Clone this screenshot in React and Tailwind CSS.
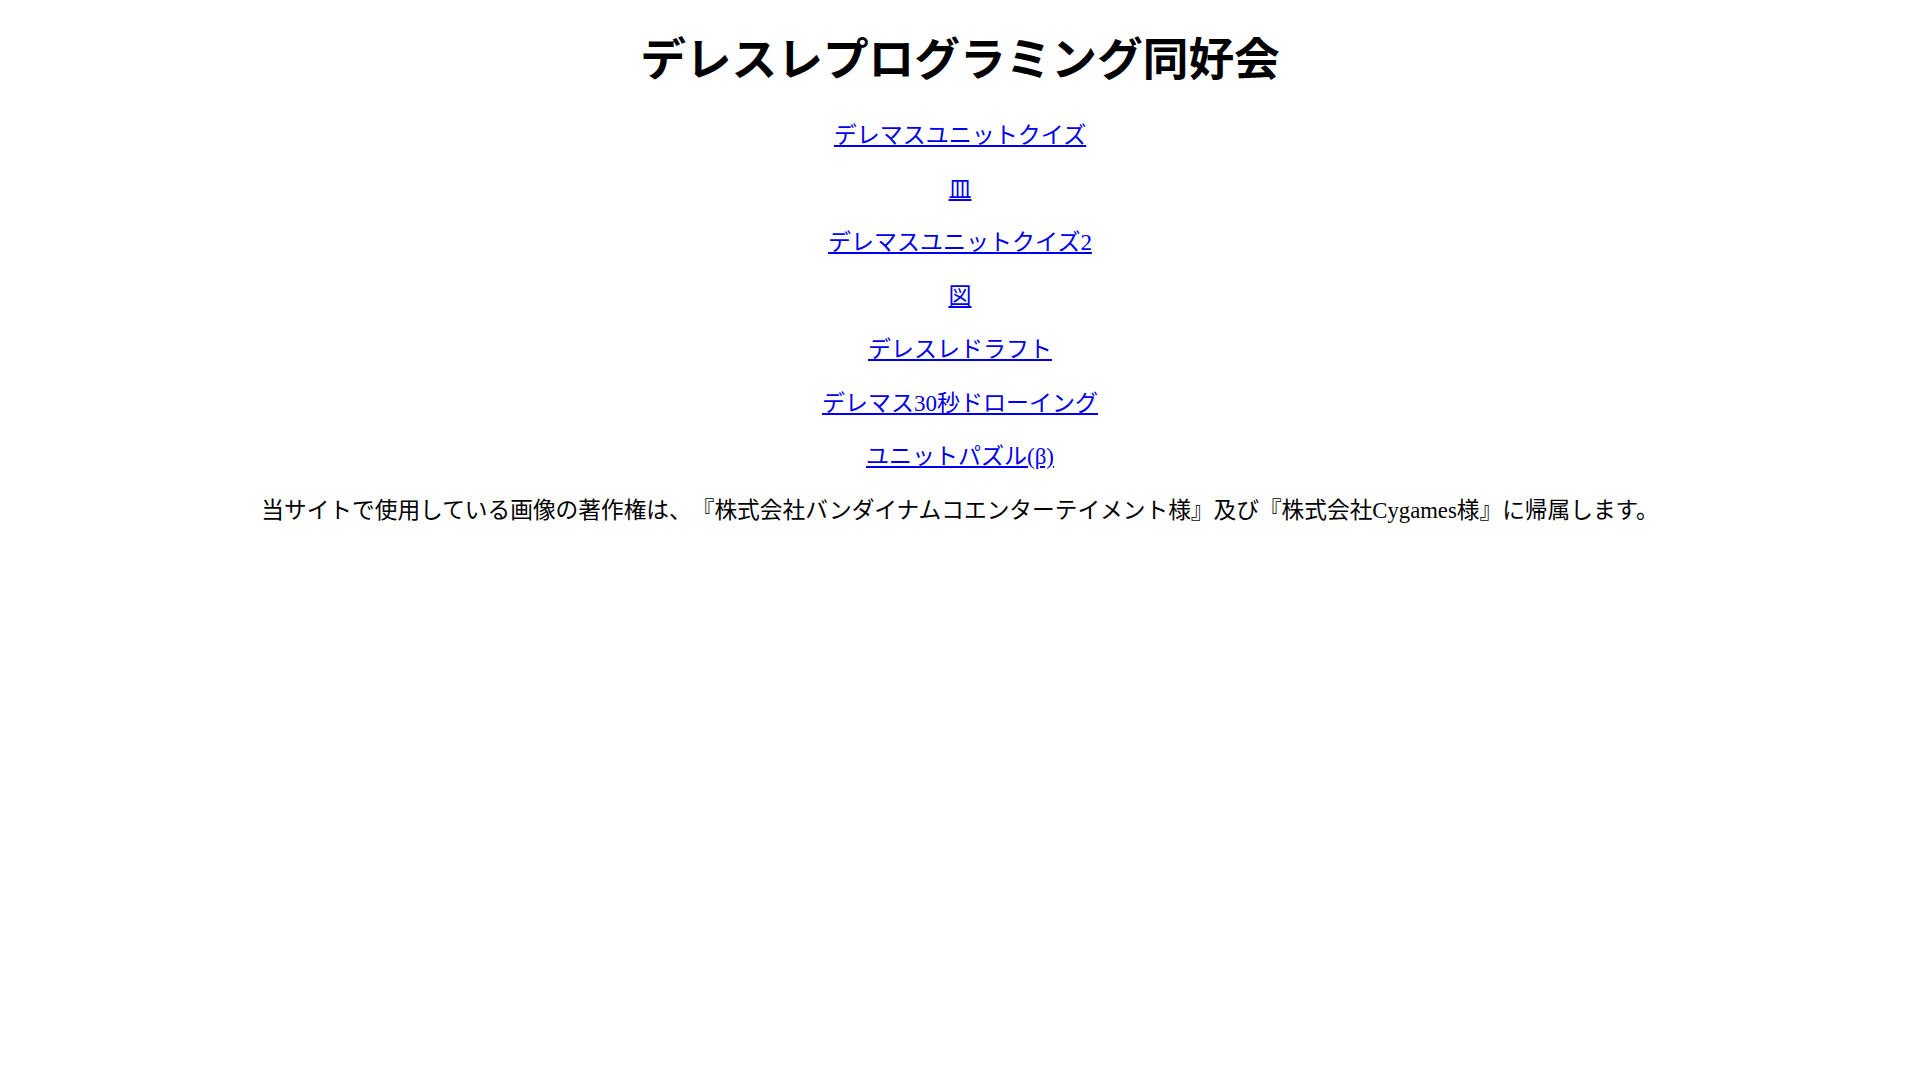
import React from 'react';

const links = [
  'デレマスユニットクイズ',
  '皿',
  'デレマスユニットクイズ2',
  '図',
  'デレスレドラフト',
  'デレマス30秒ドローイング',
  'ユニットパズル(β)',
];

function App() {
  return (
    <div
      className="min-h-screen bg-white text-black text-center [text-spacing-trim:space-all]"
      style={{ fontFamily: '"Liberation Serif", "Noto Sans CJK JP", serif' }}
    >
      <div className="pt-px">
        <h1 className="text-[45.7px] font-bold leading-[60px] mt-[30px] mb-[30px]">
          デレスレプログラミング同好会
        </h1>

        {links.map((label) => (
          <p key={label} className="text-[23px] leading-[30.5px] my-[23px]">
            <a href="#" className="text-[#0000ee] underline">
              {label}
            </a>
          </p>
        ))}

        <p className="text-[22.7px] leading-[30.5px] my-[23px]">
          当サイトで使用している画像の著作権は、『株式会社バンダイナムコエンターテイメント様』及び『株式会社Cygames様』に帰属します。
        </p>
      </div>
    </div>
  );
}

export default App;
